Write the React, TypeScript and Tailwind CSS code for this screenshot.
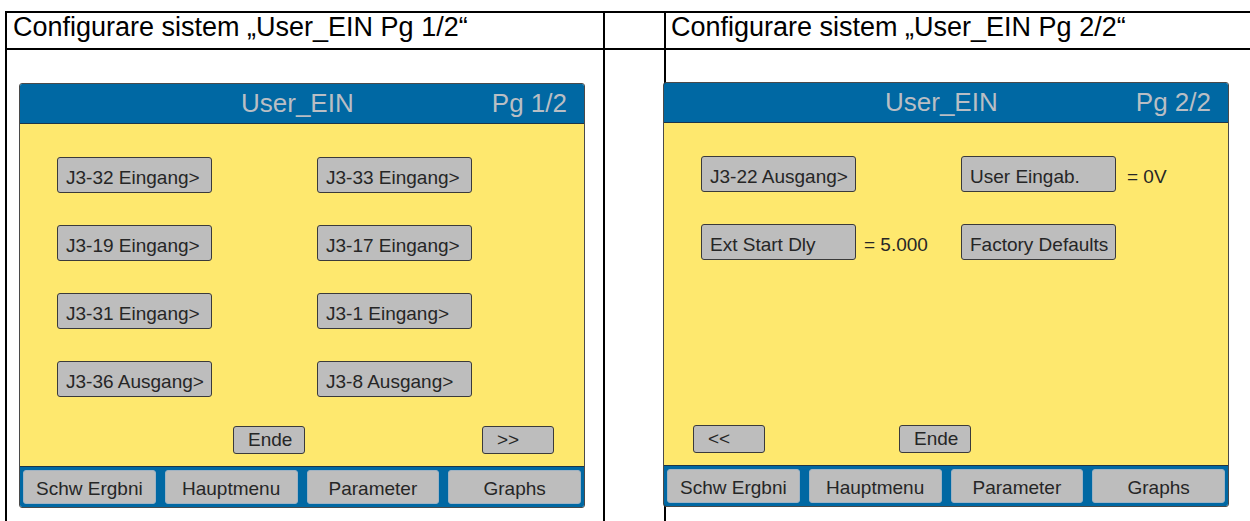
import React from 'react';

const FONT = { fontFamily: '"Liberation Sans", Arial, sans-serif' };

type Cell = { label: string; value?: string; gap?: string };

const PAGE1: Cell[][] = [
  [{ label: 'J3-32 Eingang>' }, { label: 'J3-33 Eingang>' }],
  [{ label: 'J3-19 Eingang>' }, { label: 'J3-17 Eingang>' }],
  [{ label: 'J3-31 Eingang>' }, { label: 'J3-1 Eingang>' }],
  [{ label: 'J3-36 Ausgang>' }, { label: 'J3-8 Ausgang>' }],
];

const PAGE2: Cell[][] = [
  [{ label: 'J3-22 Ausgang>' }, { label: 'User Eingab.', value: '= 0V', gap: 'ml-[11px]' }],
  [{ label: 'Ext Start Dly', value: '= 5.000', gap: 'ml-[8px]' }, { label: 'Factory Defaults' }],
];

const FOOTER = ['Schw Ergbni', 'Hauptmenu', 'Parameter', 'Graphs'];

function Btn({ label }: { label: string }) {
  return (
    <div className="h-[36px] w-[155px] shrink-0 flex items-center pl-[8px] pt-[6px] bg-[#bdbdbd] border border-[#3a3a3a] rounded-[3px] text-[19px] text-[#262626] whitespace-nowrap overflow-hidden">
      {label}
    </div>
  );
}

function SmallBtn({ label }: { label: string }) {
  return (
    <div className="h-[28px] w-[72px] shrink-0 flex items-center pl-[14px] pt-[1px] bg-[#bdbdbd] border border-[#3a3a3a] rounded-[3px] text-[19px] text-[#262626]">
      {label}
    </div>
  );
}

function Panel({ page, rows, bottom }: { page: string; rows: Cell[][]; bottom: React.ReactNode }) {
  return (
    <div className="w-[566px] flex flex-col border border-[#4a4a4a] rounded-[3px] overflow-hidden">
      {/* title bar */}
      <div className="h-[40px] bg-[#0068a3] flex items-center text-[26px] text-[#b9bec4] border-b border-[#1d3548]">
        <span className="ml-[221px]">User_EIN</span>
        <span className="ml-auto mr-[17px]">{page}</span>
      </div>

      {/* yellow body */}
      <div className="h-[342px] bg-[#fee86e] flex flex-col">
        <div className="flex flex-col gap-[32px] pt-[33px] pl-[37px]">
          {rows.map((r, i) => (
            <div key={i} className="grid grid-cols-[260px_1fr]">
              {r.map((c, j) => (
                <div key={j} className="flex items-center">
                  <Btn label={c.label} />
                  {c.value && <span className={`${c.gap} text-[19px] text-[#262626] pt-[7px]`}>{c.value}</span>}
                </div>
              ))}
            </div>
          ))}
        </div>
        <div className="mt-auto mb-[12px] flex">{bottom}</div>
      </div>

      {/* footer */}
      <div className="h-[41px] bg-[#0068a3] border-t border-[#1d3548] grid grid-cols-4 gap-[9px] px-[3px] pt-[3px]">
        {FOOTER.map(f => (
          <div key={f} className="h-[34px] flex items-center justify-center pt-[4px] bg-[#bdbdbd] rounded-[3px] border border-[#9fb3c4] text-[19px] text-[#262626]">
            {f}
          </div>
        ))}
      </div>
    </div>
  );
}

export default function App() {
  return (
    <div className="h-[521px] overflow-hidden bg-white pt-[11px] pl-[5px]" style={FONT}>
      <div className="grid grid-cols-[598px_61px_1fr] border-l-2 border-t-2 border-black">
        {/* header row */}
        <div className="h-[37px] border-r-2 border-b-2 border-black pl-[6px] text-[27px] leading-[28px] text-black whitespace-nowrap">
          Configurare sistem „User_EIN Pg 1/2“
        </div>
        <div className="h-[37px] border-r-2 border-b-2 border-black" />
        <div className="h-[37px] border-b-2 border-black pl-[5px] text-[27px] leading-[28px] text-black whitespace-nowrap">
          Configurare sistem „User_EIN Pg 2/2“
        </div>

        {/* body row */}
        <div className="h-[471px] border-r-2 border-black pt-[33px] pl-[12px]">
          <Panel
            page="Pg 1/2"
            rows={PAGE1}
            bottom={
              <>
                <div className="ml-[213px]"><SmallBtn label="Ende" /></div>
                <div className="ml-[177px]"><SmallBtn label=">>" /></div>
              </>
            }
          />
        </div>
        <div className="h-[471px] border-r-2 border-black" />
        <div className="h-[471px] pt-[32px] -ml-[3px] relative">
          <Panel
            page="Pg 2/2"
            rows={PAGE2}
            bottom={
              <>
                <div className="ml-[29px]"><SmallBtn label="<<" /></div>
                <div className="ml-[134px]"><SmallBtn label="Ende" /></div>
              </>
            }
          />
        </div>
      </div>
    </div>
  );
}
